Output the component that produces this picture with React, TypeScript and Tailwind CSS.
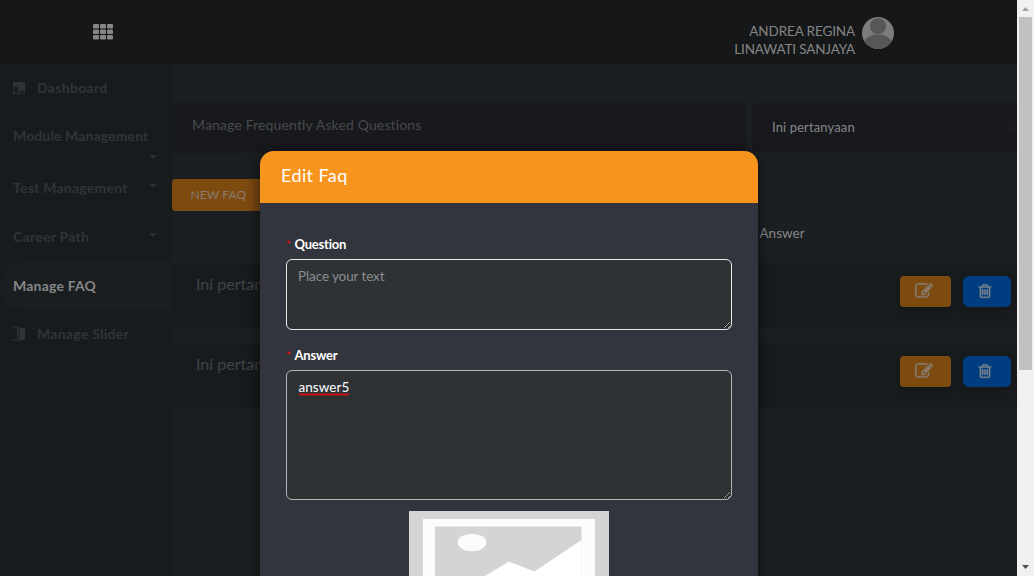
import React from "react";

const trashPath =
  "M704 736v576q0 14-9 23t-23 9h-64q-14 0-23-9t-9-23v-576q0-14 9-23t23-9h64q14 0 23 9t9 23zm256 0v576q0 14-9 23t-23 9h-64q-14 0-23-9t-9-23v-576q0-14 9-23t23-9h64q14 0 23 9t9 23zm256 0v576q0 14-9 23t-23 9h-64q-14 0-23-9t-9-23v-576q0-14 9-23t23-9h64q14 0 23 9t9 23zm128 724v-948h-896v948q0 22 7 40.5t14.5 27 10.5 8.5h832q3 0 10.5-8.5t14.5-27 7-40.5zm-672-1076h448l-48-117q-7-9-17-11h-317q-10 2-17 11zm928 32v64q0 14-9 23t-23 9h-96v948q0 83-47 143.5t-113 60.5h-832q-66 0-113-58.5t-47-141.5v-952h-96q-14 0-23-9t-9-23v-64q0-14 9-23t23-9h309l70-167q15-37 54-63t79-26h320q40 0 79 26t54 63l70 167h309q14 0 23 9t9 23z";
const editPath =
  "M888 1184l116-116-152-152-116 116v56h96v96h56zm440-720q-16-16-33 1l-350 350q-17 17-1 33t33-1l350-350q17-17 1-33zm80 594v190q0 119-84.5 203.5t-203.5 84.5h-832q-119 0-203.5-84.5t-84.5-203.5v-832q0-119 84.5-203.5t203.5-84.5h832q63 0 117 25 15 7 18 23 3 17-9 29l-49 49q-14 14-32 8-23-6-45-6h-832q-66 0-113 47t-47 113v832q0 66 47 113t113 47h832q66 0 113-47t47-113v-126q0-13 9-22l64-64q15-15 35-7t20 29zm-96-738l288 288-672 672h-288v-288zm444 132l-92 92-288-288 92-92q28-28 68-28t68 28l152 152q28 28 28 68t-28 68z";

function GridIcon() {
  return (
    <svg width="20" height="16" viewBox="0 0 20 16" fill="#868686">
      {[0, 5.5, 11].map((y) =>
        [0, 7, 14].map((x) => <rect key={`${x}-${y}`} x={x} y={y} width="6" height="4.5" rx="1" />),
      )}
    </svg>
  );
}

function Caret() {
  return (
    <svg width="8" height="4" viewBox="0 0 8 4" fill="#2c3033">
      <path d="M0 0h8L4 4z" />
    </svg>
  );
}

function Header() {
  return (
    <header className="flex h-16 shrink-0 items-start bg-[#161718]">
      <div className="pl-[93px] pt-6">
        <GridIcon />
      </div>
      <div className="ml-auto mr-[7px] pt-[22px] text-right text-[13.5px] leading-[18px] text-[#858585]">
        <div className="tracking-[-0.12px]">ANDREA REGINA</div>
        <div className="tracking-[-0.17px]">LINAWATI SANJAYA</div>
      </div>
      <svg className="mr-[123px] mt-[17px]" width="32" height="32" viewBox="0 0 32 32">
        <defs>
          <clipPath id="avatar">
            <circle cx="16" cy="16" r="16" />
          </clipPath>
        </defs>
        <g clipPath="url(#avatar)">
          <rect width="32" height="32" fill="#7c7c7c" />
          <circle cx="16" cy="9.3" r="8.1" fill="#575757" />
          <ellipse cx="16" cy="29" rx="15" ry="11.5" fill="#575757" />
          <path d="M9.5 15.5Q16 20 22.5 15.5" stroke="#7c7c7c" strokeWidth="0.5" fill="none" />
        </g>
      </svg>
    </header>
  );
}

function Sidebar() {
  return (
    <aside className="w-[172px] shrink-0 bg-[#181b1e] text-sm font-bold leading-5 text-[#303437]">
      <div className="flex h-12 items-center pl-[13px]">
        <svg width="12" height="12" viewBox="0 0 12 12">
          <rect width="12" height="12" fill="#2a2e31" />
          <path d="M0 0h12v8H6V4H0z" fill="#303437" />
          <path d="M1 5h4v6H1zM7 9h4v2H7z" fill="#1b1e21" />
        </svg>
        <span className="ml-3 tracking-[0.32px]">Dashboard</span>
      </div>
      <div className="h-[52px] pl-[13px] pt-[14px]">
        <div className="whitespace-nowrap tracking-[0.12px]">Module Management</div>
        <div className="flex justify-end pr-[15px] pt-[9px]">
          <Caret />
        </div>
      </div>
      <div className="flex h-12 items-center justify-between pl-[13px] pr-[15px]">
        <span className="tracking-[0.25px]">Test Management</span>
        <span className="-mt-1">
          <Caret />
        </span>
      </div>
      <div className="flex h-[50px] items-center justify-between pl-[13px] pr-[15px]">
        <span className="tracking-[0.27px]">Career Path</span>
        <span className="-mt-1">
          <Caret />
        </span>
      </div>
      <div className="flex h-12 items-center rounded-l-3xl bg-[#1b1e20] pl-[13px] text-[#858687]">
        <span className="tracking-[0.2px]">Manage FAQ</span>
      </div>
      <div className="flex h-12 items-center pl-[13px]">
        <svg width="12" height="14" viewBox="0 0 12 14">
          <rect x="5" width="2" height="14" fill="#25292c" />
          <path d="M0 0h5v14H0v-1.5h4v-11H0z" fill="#292d30" />
          <rect x="7" y="1" width="5" height="12" fill="#303437" />
        </svg>
        <span className="ml-3 tracking-[0.27px]">Manage Slider</span>
      </div>
    </aside>
  );
}

function FaqRow() {
  return (
    <div className="flex h-[65px] items-start rounded bg-[#181b1d]">
      <span className="pl-6 pt-[9px] text-[16px] leading-6 text-[#414345]">Ini pertanyaan</span>
      <button className="ml-auto flex h-[31px] w-[51px] translate-y-[13px] items-center justify-center rounded bg-[#7d4a10] pb-px pr-1 shadow-md">
        <svg width="18" height="18" viewBox="0 0 1792 1792" fill="#8a7b70" stroke="#8a7b70" strokeWidth="45">
          <path d={editPath} />
        </svg>
      </button>
      <button className="ml-3 mr-1.5 flex h-[31px] w-12 translate-y-[13px] items-center justify-center rounded-md bg-[#003c80] pb-px pr-1 shadow-md">
        <svg width="16" height="16" viewBox="0 0 1792 1792" fill="#7f8790" stroke="#7f8790" strokeWidth="45">
          <path d={trashPath} />
        </svg>
      </button>
    </div>
  );
}

function Main() {
  return (
    <main className="min-w-0 flex-1 bg-[#1c1f22] pt-[39px]">
      <div className="flex gap-1.5">
        <div className="h-[50px] w-[574px] rounded bg-[#18191c] pl-5 pt-3 text-sm leading-5 text-[#47494b]">
          <span className="tracking-[0.14px]">Manage Frequently Asked Questions</span>
        </div>
        <div className="flex h-[49px] flex-1 items-center justify-between rounded-l bg-[#18191c] pl-5 pr-[2px] text-[13px] text-[#85868a]">
          <span className="tracking-[0.12px]">Ini pertanyaan</span>
          <svg width="9" height="9" viewBox="0 0 9 9" stroke="#222426" fill="none">
            <circle cx="4" cy="4" r="3" />
            <path d="M6 6l3 3" />
          </svg>
        </div>
      </div>
      <div className="h-[26px]" />
      <button className="block h-8 w-[104px] rounded bg-[#7d4a10] pl-[18.5px] text-left text-xs tracking-[0.08px] text-[#8a7b6e]">
        NEW FAQ
      </button>
      <div className="flex h-[52px] items-start pl-[587.5px] pt-3 text-[13.5px] leading-5 text-[#858687]">Answer</div>
      <div className="flex flex-col gap-[15px]">
        <FaqRow />
        <FaqRow />
      </div>
    </main>
  );
}

function Scrollbar() {
  return (
    <div className="flex w-[17px] shrink-0 flex-col items-center bg-[#f1f1f1]">
      <svg width="17" height="17" viewBox="0 0 17 17" fill="#a3a3a3">
        <path d="M5 11h7L8.5 7z" />
      </svg>
      <div className="h-[353px] w-[13px] bg-[#c1c1c1]" />
      <svg className="mt-auto" width="17" height="17" viewBox="0 0 17 17" fill="#505050">
        <path d="M5 6h7L8.5 10z" />
      </svg>
    </div>
  );
}

function Label({ children }: { children: React.ReactNode }) {
  return (
    <div className="flex h-5 items-start text-[13px] font-bold leading-5 text-white">
      <span className="w-[8.5px] shrink-0 text-[12px] font-normal leading-5 text-[#e80c0c]">*</span>
      <span className="-mt-px tracking-[-0.2px]">{children}</span>
    </div>
  );
}

function Placeholder() {
  return (
    <svg className="mx-auto mt-[11px] block" width="200" height="150" viewBox="0 0 200 150">
      <rect width="200" height="150" fill="#d4d4d4" />
      <rect x="14" y="8" width="172" height="142" fill="#fcfcfc" />
      <rect x="26" y="15.5" width="146.5" height="134.5" fill="#d4d4d4" />
      <ellipse cx="63" cy="31.5" rx="14.3" ry="8.8" fill="#fcfcfc" />
      <path d="M26 95L47 66l29-1 24-14.5L125.500 60.500 172.500 29v121H26z" fill="#fff" />
    </svg>
  );
}

function EditModal() {
  return (
    <div className="absolute left-[260px] top-[151px] h-[425px] w-[498px] overflow-hidden rounded-t-[14px] bg-[#32353d]">
      <div className="flex h-[52px] items-start bg-[#f7941d] pl-[21px] pt-[10px] text-[18px] leading-7 tracking-[0.4px] text-white">
        Edit Faq
      </div>
      <div className="px-[26px] pt-8">
        <Label>Question</Label>
        <textarea
          placeholder="Place your text"
          className="mt-1 block h-[71px] w-full resize rounded-md border border-[#e9e9e9] bg-[#2e3235] px-[11px] py-[6px] text-[13.5px] leading-5 tracking-[-0.1px] text-white outline-none placeholder:text-[#8b8d8f]"
        />
        <div className="h-4" />
        <Label>Answer</Label>
        <div className="relative mt-[4px]">
          <textarea
            defaultValue="answer5"
            spellCheck={false}
            className="block h-[130px] w-full resize rounded-md border border-[#b4b5b6] bg-[#2e3235] px-[11.5px] py-[6px] text-[13.5px] leading-5 tracking-[0.05px] text-white outline-none"
          />
          <svg className="absolute left-[13px] top-[23px]" width="50" height="3" viewBox="0 0 50 3">
            <path
              d="M0 1l2 1 2-1 2 1 2-1 2 1 2-1 2 1 2-1 2 1 2-1 2 1 2-1 2 1 2-1 2 1 2-1 2 1 2-1 2 1 2-1 2 1 2-1 2 1 2-1 2 1"
              fill="none"
              stroke="#e80c0c"
              strokeWidth="1.4"
            />
          </svg>
        </div>
        <Placeholder />
      </div>
    </div>
  );
}

export default function App() {
  return (
    <div className="relative flex h-[576px] w-[1034px] overflow-hidden bg-[#1c1f22] font-['Lato',sans-serif]">
      <div className="flex min-w-0 flex-1 flex-col">
        <Header />
        <div className="flex flex-1">
          <Sidebar />
          <Main />
        </div>
      </div>
      <Scrollbar />
      <div className="absolute left-[260px] top-[151px] h-[440px] w-[498px] rounded-t-[14px] shadow-[0_2px_14px_rgba(0,0,0,0.65)]" />
      <EditModal />
    </div>
  );
}
